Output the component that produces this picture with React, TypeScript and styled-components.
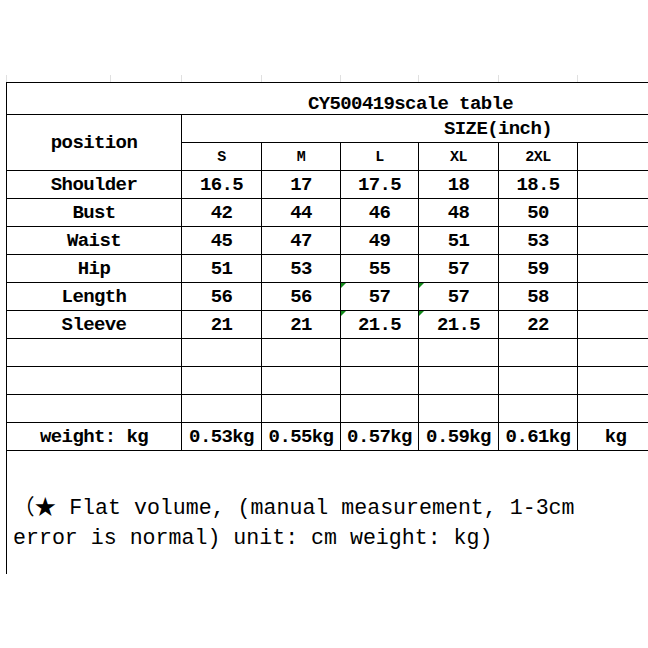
import React from 'react';
import styled, { createGlobalStyle, css } from 'styled-components';

const GlobalStyle = createGlobalStyle`
  html, body {
    margin: 0;
    padding: 0;
    background: #ffffff;
    overflow: hidden;
  }
  body {
    font-family: "Liberation Mono", "Noto Sans CJK SC", monospace;
    color: #000000;
  }
`;

const Page = styled.div`
  width: 648px;
  height: 648px;
  overflow: hidden;
  padding-top: 75px;
  box-sizing: border-box;
`;

const GridStrip = styled.div`
  display: flex;
  height: 7px;
  padding-left: 6px;
`;

const GridTick = styled.div<{ $w: number }>`
  flex: 0 0 ${p => p.$w}px;
  border-left: 1px solid #e0e0e0;
  box-sizing: border-box;
`;

const Sheet = styled.table`
  margin-left: 6px;
  width: 808px;
  table-layout: fixed;
  border-collapse: collapse;
`;

const Col = styled.col<{ $w: number }>`
  width: ${p => p.$w}px;
`;

const Row = styled.tr<{ $h: number }>`
  height: ${p => p.$h}px;
`;

const Cell = styled.td<{ $mark?: boolean }>`
  border: 1px solid #000000;
  padding: 0;
  text-align: center;
  vertical-align: middle;
  font-size: 19px;
  font-weight: bold;
  letter-spacing: -0.6px;
  white-space: nowrap;
  position: relative;
  ${p =>
    p.$mark &&
    css`
      &::before {
        content: '';
        position: absolute;
        left: 0;
        top: 0;
        border-top: 5px solid #12891a;
        border-right: 5px solid transparent;
      }
    `}
`;

const TitleCell = styled(Cell)`
  vertical-align: bottom;
  line-height: 17px;
  padding-bottom: 1px;
`;

const SizeCell = styled(Cell)`
  font-size: 15px;
  letter-spacing: -0.5px;
  padding-top: 2px;
`;

const NoteCell = styled.td`
  border-left: 1px solid #000000;
  border-top: 1px solid #000000;
  height: 81px;
  padding: 42px 6px 0;
  vertical-align: top;
  text-align: left;
  font-size: 21.6px;
  line-height: 30px;
  white-space: nowrap;
`;

const COLS = [175, 80, 79, 78, 80, 79, 76, 161];
const TICKS = [104, 71, 80, 79, 78, 80, 79, 76, 200];
const SIZES = ['S', 'M', 'L', 'XL', '2XL'];

const MEASURES: { name: string; values: string[]; marked?: boolean }[] = [
  { name: 'Shoulder', values: ['16.5', '17', '17.5', '18', '18.5'] },
  { name: 'Bust', values: ['42', '44', '46', '48', '50'] },
  { name: 'Waist', values: ['45', '47', '49', '51', '53'] },
  { name: 'Hip', values: ['51', '53', '55', '57', '59'] },
  { name: 'Length', values: ['56', '56', '57', '57', '58'], marked: true },
  { name: 'Sleeve', values: ['21', '21', '21.5', '21.5', '22'], marked: true },
];

const WEIGHTS = ['0.53kg', '0.55kg', '0.57kg', '0.59kg', '0.61kg', 'kg'];

const App: React.FC = () => {
  return (
    <Page>
      <GlobalStyle />
      <GridStrip>
        {TICKS.map((w, i) => (
          <GridTick key={i} $w={w} />
        ))}
      </GridStrip>
      <Sheet>
        <colgroup>
          {COLS.map((w, i) => (
            <Col key={i} $w={w} />
          ))}
        </colgroup>
        <tbody>
          <Row $h={32}>
            <TitleCell colSpan={8}>CY500419scale table</TitleCell>
          </Row>
          <Row $h={28}>
            <Cell rowSpan={2}>position</Cell>
            <Cell colSpan={7}>SIZE(inch)</Cell>
          </Row>
          <Row $h={28}>
            {SIZES.map(s => (
              <SizeCell key={s}>{s}</SizeCell>
            ))}
            <SizeCell />
            <SizeCell />
          </Row>
          {MEASURES.map(m => (
            <Row $h={28} key={m.name}>
              <Cell>{m.name}</Cell>
              {m.values.map((v, i) => (
                <Cell key={i} $mark={m.marked && (i === 2 || i === 3)}>
                  {v}
                </Cell>
              ))}
              <Cell />
              <Cell />
            </Row>
          ))}
          {[0, 1, 2].map(i => (
            <Row $h={28} key={`blank-${i}`}>
              {COLS.map((_, j) => (
                <Cell key={j} />
              ))}
            </Row>
          ))}
          <Row $h={28}>
            <Cell>weight: kg</Cell>
            {WEIGHTS.map((w, i) => (
              <Cell key={i}>{w}</Cell>
            ))}
            <Cell />
          </Row>
          <tr>
            <NoteCell colSpan={8}>
              （★ Flat volume, (manual measurement, 1-3cm
              <br />
              error is normal) unit: cm weight: kg)
            </NoteCell>
          </tr>
        </tbody>
      </Sheet>
    </Page>
  );
};

export default App;
